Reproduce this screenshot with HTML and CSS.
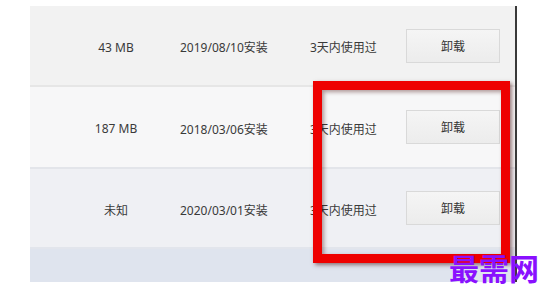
FILE: index.html
```html
<!DOCTYPE html>
<html lang="zh-CN">
<head>
<meta charset="utf-8">
<link rel="stylesheet" href="styles.css">
</head>
<body>
<div class="stage">
  <div class="panel">
    <div class="row row1">
      <div class="size">43 MB</div>
      <div class="date">2019/08/10安装</div>
      <div class="use">3天内使用过</div>
      <div class="btn">卸载</div>
    </div>
    <div class="row row2">
      <div class="size">187 MB</div>
      <div class="date">2018/03/06安装</div>
      <div class="use">3天内使用过</div>
      <div class="btn">卸载</div>
    </div>
    <div class="row row3">
      <div class="size">未知</div>
      <div class="date">2020/03/01安装</div>
      <div class="use">3天内使用过</div>
      <div class="btn">卸载</div>
    </div>
    <div class="footer"></div>
  </div>
  <div class="divider"></div>
  <div class="highlight"></div>
  <div class="watermark">最需网</div>
</div>
</body>
</html>
```
FILE: styles.css
```css
* { box-sizing: border-box; }
html, body { margin: 0; padding: 0; background: #ffffff; }
body {
  width: 560px;
  height: 297px;
  overflow: hidden;
  font-family: "Noto Sans", "Noto Sans CJK SC", sans-serif;
  font-size: 12px;
  color: #3a3a3a;
}
.stage {
  position: relative;
  width: 560px;
  height: 297px;
  padding: 6px 0 0 30px;
  display: flex;
}
.panel {
  width: 485px;
  height: 276px;
  display: flex;
  flex-direction: column;
}
.row {
  display: grid;
  grid-template-columns: 60px 164px 96px 94px;
  align-items: center;
  padding-left: 56px;
  border-bottom: 2px solid #e4e5e8;
}
.row1 { height: 81px; background: #f2f2f2; border-bottom-color: #e6e6e6; }
.row2 { height: 82px; background: #f7f7f8; border-bottom-color: #e3e5ea; }
.row3 { height: 80px; background: #eff0f4; border-bottom-color: #e2e5ec; }
.footer { flex: 1; background: #dfe4ee; }
.size, .date, .use { padding-top: 3px; }
.size { text-align: center; }
.date { padding-left: 34px; }
.btn {
  height: 34px;
  border: 1px solid #d9d9d9;
  background: linear-gradient(#f5f5f5, #ececec);
  display: flex;
  align-items: center;
  justify-content: center;
  color: #333333;
}
.divider {
  width: 2px;
  height: 276px;
  background: #3a3a3a;
}
.highlight {
  position: absolute;
  left: 313px;
  top: 81px;
  width: 197px;
  height: 182px;
  border: 9px solid #ee0000;
  box-shadow: 2px 2px 4px rgba(60, 0, 0, 0.5), inset 2px 2px 4px rgba(60, 0, 0, 0.4);
}
.watermark {
  position: absolute;
  left: 449px;
  top: 247px;
  font-family: "Noto Sans CJK SC", sans-serif;
  font-weight: 700;
  font-size: 30px;
  line-height: 40px;
  color: #8a10ff;
}
```
